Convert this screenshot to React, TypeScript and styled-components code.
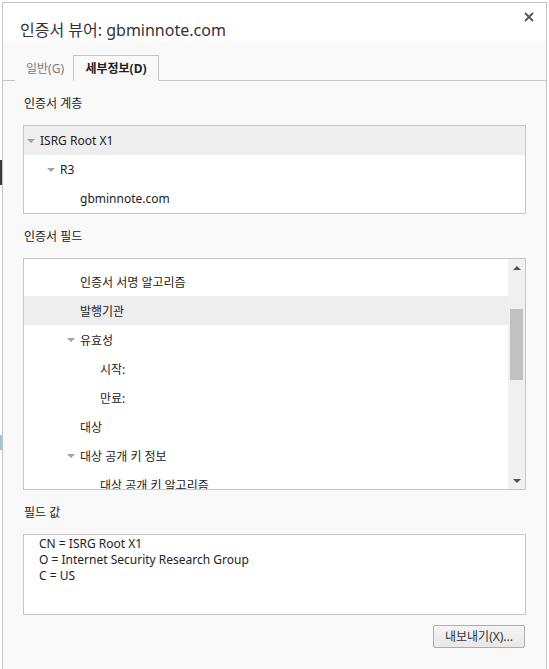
import React from "react";
import styled, { createGlobalStyle } from "styled-components";

const Global = createGlobalStyle`
  html, body { margin: 0; padding: 0; background: #ffffff; }
  body { font-family: "Noto Sans", "Noto Sans CJK KR", sans-serif; font-size: 12px; color: #222; }
  * { box-sizing: border-box; }
`;

const Desktop = styled.div`
  position: relative;
  width: 549px;
  height: 669px;
  overflow: hidden;
  padding: 2px 0 0 2px;
`;

const BackdropBit = styled.div<{ $top: number; $h: number; $c: string }>`
  position: absolute;
  left: 0;
  width: 2px;
  top: ${(p) => p.$top}px;
  height: ${(p) => p.$h}px;
  background: ${(p) => p.$c};
`;

const Dialog = styled.div`
  width: 545px;
  height: 690px;
  border: 1px solid #c4c4c4;
  background: #f9f9f9;
  display: flex;
  flex-direction: column;
`;

const TitleBar = styled.div`
  height: 38px;
  background: #ffffff;
  display: flex;
  align-items: flex-start;
  justify-content: space-between;
  padding-left: 17px;
`;

const Title = styled.div`
  margin-top: 17px;
  font-size: 16px;
  line-height: 20px;
  color: #333;
`;

const Close = styled.button`
  margin: 9px 12px 0 0;
  width: 10px;
  height: 10px;
  padding: 0;
  border: 0;
  background: transparent;
  display: flex;
`;

const TabStrip = styled.div`
  height: 40px;
  border-bottom: 1px solid #c4c4c4;
  display: flex;
  align-items: flex-end;
  padding-left: 12px;
`;

const Tab = styled.div<{ $active?: boolean }>`
  height: 26px;
  margin-bottom: -1px;
  width: ${(p) => (p.$active ? 86 : 58)}px;
  padding-left: ${(p) => (p.$active ? 0 : 10)}px;
  text-align: ${(p) => (p.$active ? "center" : "left")};
  line-height: 24px;
  padding-top: 1px;
  font-size: 12px;
  font-weight: ${(p) => (p.$active ? 700 : 400)};
  color: ${(p) => (p.$active ? "#1e1e1e" : "#7a7a7a")};
  background: #f9f9f9;
  border: ${(p) => (p.$active ? "1px solid #c4c4c4" : "1px solid transparent")};
  border-bottom: 1px solid ${(p) => (p.$active ? "#f9f9f9" : "transparent")};
`;

const Content = styled.div`
  padding: 0 20px;
  display: flex;
  flex-direction: column;
`;

const Label = styled.div`
  margin: 15px 0 13px 1px;
  line-height: 16px;
  color: #222;
`;

const Box = styled.div<{ $h: number; $indent?: number }>`
  height: ${(p) => p.$h}px;
  border: 1px solid #c6c6c6;
  background: #ffffff;
  overflow: hidden;
  display: flex;
  padding-left: ${(p) => p.$indent ?? 0}px;
`;

const List = styled.div<{ $pad?: number }>`
  flex: 1;
  display: flex;
  flex-direction: column;
  padding-top: ${(p) => p.$pad ?? 0}px;
`;

const Row = styled.div<{ $level: number; $sel?: boolean }>`
  height: 29px;
  flex: none;
  display: flex;
  align-items: center;
  padding-left: ${(p) => 3 + p.$level * 20}px;
  background: ${(p) => (p.$sel ? "#eeeeee" : "transparent")};
  color: #222;
  white-space: nowrap;
`;

const Twisty = styled.span<{ $show: boolean }>`
  width: 13px;
  flex: none;
  display: flex;
  align-items: center;
  &::before {
    content: "";
    display: ${(p) => (p.$show ? "block" : "none")};
    width: 0;
    height: 0;
    margin-top: 1px;
    border-left: 4px solid transparent;
    border-right: 4px solid transparent;
    border-top: 4px solid #a2a2a2;
  }
`;

const Scrollbar = styled.div`
  width: 17px;
  flex: none;
  background: #f0f0f0;
  display: flex;
  flex-direction: column;
  align-items: center;
`;

const Arrow = styled.div<{ $up?: boolean }>`
  height: 17px;
  width: 17px;
  display: flex;
  align-items: center;
  justify-content: center;
  &::before {
    content: "";
    width: 0;
    height: 0;
    border-left: 4px solid transparent;
    border-right: 4px solid transparent;
    ${(p) =>
      p.$up
        ? "border-bottom: 4px solid #505050;"
        : "border-top: 4px solid #505050;"}
  }
`;

const Track = styled.div`
  flex: 1;
  width: 100%;
  padding: 33px 2px 0 2px;
`;

const Thumb = styled.div`
  height: 71px;
  background: #c1c1c1;
`;

const ValueLine = styled.div`
  height: 16px;
  flex: none;
  line-height: 16px;
  color: #222;
  white-space: nowrap;
`;

const Footer = styled.div`
  display: flex;
  justify-content: flex-end;
  padding-top: 10px;
  padding-right: 1px;
`;

const Button = styled.button`
  width: 92px;
  height: 23px;
  border: 1px solid #adadad;
  border-radius: 2px;
  background: linear-gradient(#f4f4f4, #e8e8e8);
  font-family: "Noto Sans", "Noto Sans CJK KR", sans-serif;
  font-size: 12px;
  color: #333;
  padding: 0;
  line-height: 20px;
`;

type Node = { label: string; level: number; twisty?: boolean; sel?: boolean };

const hierarchy: Node[] = [
  { label: "ISRG Root X1", level: 0, twisty: true, sel: true },
  { label: "R3", level: 1, twisty: true },
  { label: "gbminnote.com", level: 2 },
];

const fields: Node[] = [
  { label: "인증서 서명 알고리즘", level: 2 },
  { label: "발행기관", level: 2, sel: true },
  { label: "유효성", level: 2, twisty: true },
  { label: "시작:", level: 3 },
  { label: "만료:", level: 3 },
  { label: "대상", level: 2 },
  { label: "대상 공개 키 정보", level: 2, twisty: true },
  { label: "대상 공개 키 알고리즘", level: 3 },
];

const values = ["CN = ISRG Root X1", "O = Internet Security Research Group", "C = US"];

function TreeRow({ n }: { n: Node }) {
  return (
    <Row $level={n.level} $sel={n.sel}>
      <Twisty $show={!!n.twisty} />
      {n.label}
    </Row>
  );
}

export default function App() {
  return (
    <>
      <Global />
      <Desktop>
        <BackdropBit $top={160} $h={25} $c="#3a3a3a" />
        <BackdropBit $top={435} $h={15} $c="#9cc3ea" />
        <Dialog>
          <TitleBar>
            <Title>인증서 뷰어: gbminnote.com</Title>
            <Close aria-label="close">
              <svg width="10" height="10" viewBox="0 0 10 10">
                <path d="M1 1 L9 9 M9 1 L1 9" stroke="#555" strokeWidth="1.8" />
              </svg>
            </Close>
          </TitleBar>
          <TabStrip>
            <Tab>일반(G)</Tab>
            <Tab $active>세부정보(D)</Tab>
          </TabStrip>
          <Content>
            <Label>인증서 계층</Label>
            <Box $h={89}>
              <List>
                {hierarchy.map((n) => (
                  <TreeRow key={n.label} n={n} />
                ))}
              </List>
            </Box>
            <Label>인증서 필드</Label>
            <Box $h={232}>
              <List $pad={8}>
                {fields.map((n) => (
                  <TreeRow key={n.label} n={n} />
                ))}
              </List>
              <Scrollbar>
                <Arrow $up />
                <Track>
                  <Thumb />
                </Track>
                <Arrow />
              </Scrollbar>
            </Box>
            <Label>필드 값</Label>
            <Box $h={81} $indent={15}>
              <List $pad={1}>
                {values.map((v) => (
                  <ValueLine key={v}>{v}</ValueLine>
                ))}
              </List>
            </Box>
            <Footer>
              <Button>내보내기(X)...</Button>
            </Footer>
          </Content>
        </Dialog>
      </Desktop>
    </>
  );
}
